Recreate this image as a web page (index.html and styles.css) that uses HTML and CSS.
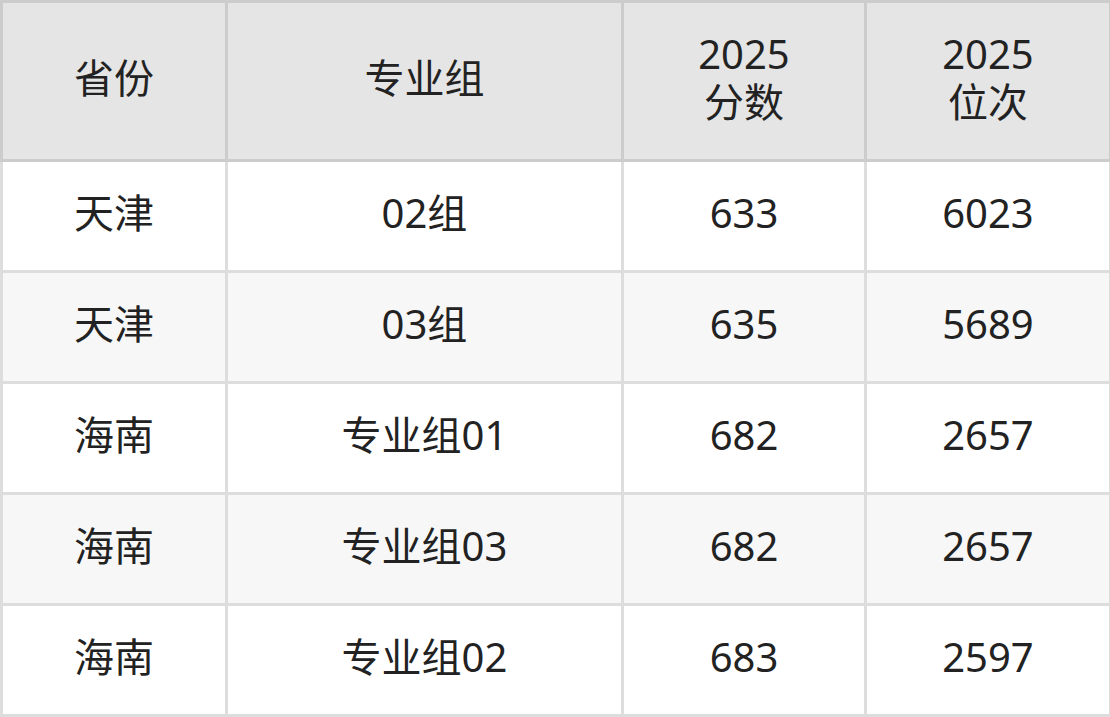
FILE: index.html
```html
<!DOCTYPE html>
<html lang="zh-CN">
<head>
<meta charset="utf-8">
<link rel="stylesheet" href="styles.css">
</head>
<body>
<table class="scores">
  <colgroup>
    <col class="c1"><col class="c2"><col class="c3"><col class="c4">
  </colgroup>
  <thead>
    <tr>
      <th>省份</th>
      <th>专业组</th>
      <th>2025<br>分数</th>
      <th>2025<br>位次</th>
    </tr>
  </thead>
  <tbody>
    <tr><td>天津</td><td>02组</td><td>633</td><td>6023</td></tr>
    <tr class="alt"><td>天津</td><td>03组</td><td>635</td><td>5689</td></tr>
    <tr><td>海南</td><td>专业组01</td><td>682</td><td>2657</td></tr>
    <tr class="alt"><td>海南</td><td>专业组03</td><td>682</td><td>2657</td></tr>
    <tr><td>海南</td><td>专业组02</td><td>683</td><td>2597</td></tr>
  </tbody>
</table>
</body>
</html>
```

FILE: styles.css
```css
html, body {
  margin: 0;
  padding: 0;
  background: #ffffff;
}

.scores {
  border-collapse: collapse;
  table-layout: fixed;
  width: 1109px;
  font-family: "Noto Sans", "Noto Sans CJK SC", sans-serif;
  font-size: 40px;
  line-height: 48px;
  color: #222222;
}

.c1 { width: 225px; }
.c2 { width: 396px; }
.c3 { width: 243px; }
.c4 { width: 245px; }

.scores th,
.scores td {
  text-align: center;
  vertical-align: middle;
  padding: 0 0 6px 0;
  font-weight: 400;
}

.scores th {
  height: 150px;
  background: #e5e5e5;
  border: 3px solid #cccccc;
}

.scores td {
  height: 102px;
  background: #ffffff;
  border: 3px solid #dddddd;
}

.scores tr.alt td {
  background: #f7f7f7;
}
```
